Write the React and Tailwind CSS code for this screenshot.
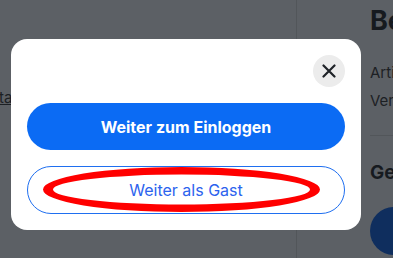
import React from "react";

function CloseIcon() {
  return (
    <svg width="14" height="14" viewBox="0 0 14 14" fill="none">
      <path d="M1.5 1.5L12.5 12.5M12.5 1.5L1.5 12.5" stroke="#1f2328" strokeWidth="2.2" strokeLinecap="round" />
    </svg>
  );
}

export default function App() {
  return (
    <div
      className="relative w-[393px] h-[258px] overflow-hidden bg-[#5c6065]"
      style={{ fontFamily: "Inter, 'Liberation Sans', sans-serif" }}
    >
      {/* page behind the overlay */}
      <div className="flex h-full">
        <div className="w-[297px] shrink-0 border-r border-[#52565a] pt-[85px]">
          <span className="text-[15px] text-[#1c2024] underline ml-[-1px]">ta</span>
        </div>
        <div className="flex-1 pl-[73px] pt-[4px]">
          <div className="text-[27px] font-bold text-[#161a1f] leading-[34px] whitespace-nowrap">Be</div>
          <div className="mt-[25px] text-[15px] text-[#1c2024] leading-[20px] whitespace-nowrap">Arti</div>
          <div className="mt-[8px] text-[15px] text-[#1c2024] leading-[20px] whitespace-nowrap">Ver</div>
          <div className="mt-[24px] border-t border-[#52565a]" />
          <div className="mt-[25px] text-[19px] font-bold text-[#161a1f] leading-[24px] whitespace-nowrap">Ge</div>
          <div className="mt-[22px] w-[48px] h-[48px] rounded-full bg-[#0f2e5e]" />
        </div>
      </div>

      {/* modal */}
      <div className="absolute left-[11px] top-[39px] w-[350px] h-[191px] bg-white rounded-[16px] p-4 flex flex-col gap-4">
        <div className="flex justify-end">
          <button className="w-8 h-8 rounded-full bg-[#ececec] flex items-center justify-center">
            <CloseIcon />
          </button>
        </div>
        <button className="h-12 w-full rounded-full bg-[#0b6bf4] text-white text-[16px] font-bold">
          Weiter zum Einloggen
        </button>
        <button className="h-12 w-full rounded-full border border-[#1f6ff0] bg-white text-[#2c63ee] text-[16px]">
          Weiter als Gast
        </button>
      </div>

      {/* annotation */}
      <svg className="absolute left-0 top-0 pointer-events-none" width="393" height="258">
        <path
          fillRule="evenodd"
          fill="#ff0000"
          d="M43 189.5a138.5 22.5 0 1 0 277 0a138.5 22.5 0 1 0 -277 0Z M53 189.5a128.5 15 0 1 0 257 0a128.5 15 0 1 0 -257 0Z"
        />
      </svg>
    </div>
  );
}
